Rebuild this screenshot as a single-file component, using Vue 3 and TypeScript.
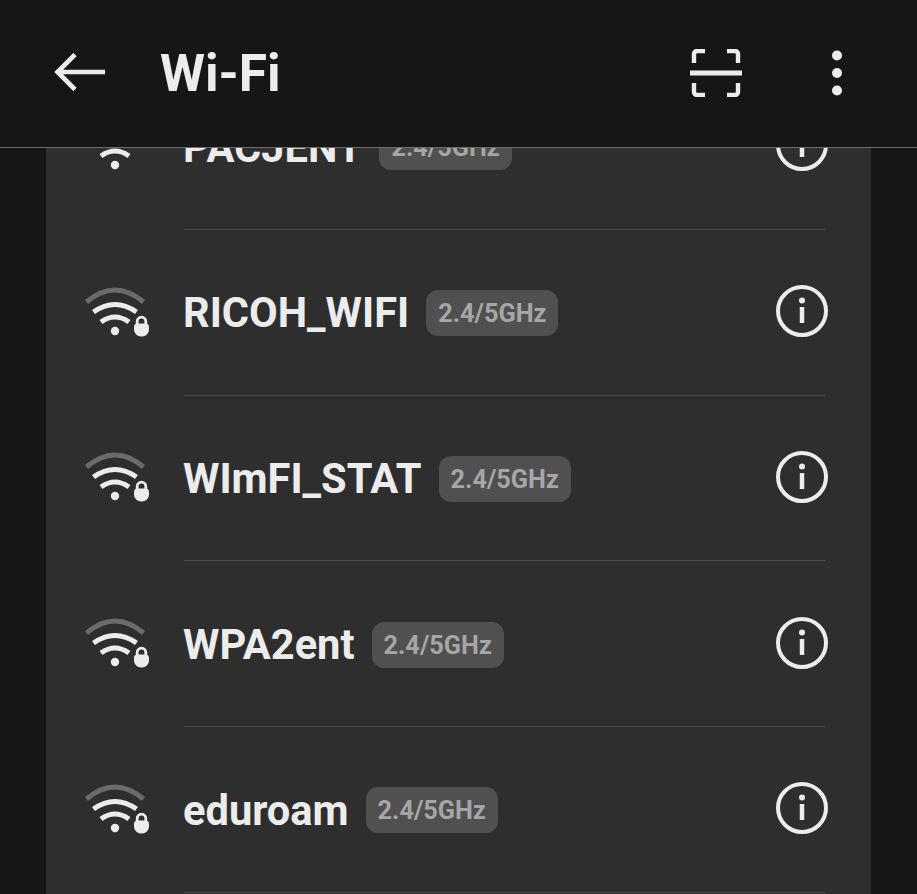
<script setup lang="ts">
interface Network {
  name: string
  secured: boolean
}

const networks: Network[] = [
  { name: 'PACJENT', secured: false },
  { name: 'RICOH_WIFI', secured: true },
  { name: 'WImFI_STAT', secured: true },
  { name: 'WPA2ent', secured: true },
  { name: 'eduroam', secured: true },
]
</script>

<template>
  <div class="page">
    <header class="topbar">
      <svg class="back" width="52" height="40" viewBox="0 0 52 40" fill="none">
        <path d="M51 19H3.5M21 1.5 3.5 19 21 36.5" stroke="#ececec" stroke-width="4.6" />
      </svg>
      <h1 class="title">Wi-Fi</h1>
      <svg class="scan" width="52" height="48" viewBox="0 0 52 48" fill="none">
        <path
          d="M15 2H7a3 3 0 0 0-3 3v9M37 2h8a3 3 0 0 1 3 3v9M15 46H7a3 3 0 0 1-3-3v-9M37 46h8a3 3 0 0 0 3-3v-9"
          stroke="#ececec"
          stroke-width="4.4"
        />
        <path d="M0 24h52" stroke="#ececec" stroke-width="5" />
      </svg>
      <svg class="more" width="12" height="48" viewBox="0 0 12 48">
        <circle cx="6" cy="6.5" r="5" fill="#ececec" />
        <circle cx="6" cy="24" r="5" fill="#ececec" />
        <circle cx="6" cy="41.5" r="5" fill="#ececec" />
      </svg>
    </header>

    <ul class="card">
      <li v-for="net in networks" :key="net.name" class="row">
        <svg class="wifi" width="70" height="56" viewBox="0 0 70 56" fill="none">
          <path d="M6.5 18Q35-6 63.5 18" stroke="#6b6b6b" stroke-width="5" />
          <path d="M13.5 28Q35 13 56.5 28" stroke="#ececec" stroke-width="5" />
          <path d="M21 38Q35 28 49 38" stroke="#ececec" stroke-width="5" />
          <circle cx="35" cy="47" r="4.2" fill="#ececec" />
          <template v-if="net.secured">
            <path d="M57.2 41v-3.5a4.3 4.3 0 0 1 8.6 0V41" stroke="#ececec" stroke-width="2.8" />
            <path
              d="M54 43a3.5 3.5 0 0 1 3.5-3.5h8A3.5 3.5 0 0 1 69 43v2.5a7 7 0 0 1-7 7h-1a7 7 0 0 1-7-7z"
              fill="#ececec"
            />
          </template>
        </svg>
        <div class="row-body">
          <span class="name">{{ net.name }}</span>
          <span class="badge">2.4/5GHz</span>
          <svg class="info" width="52" height="52" viewBox="0 0 52 52" fill="none">
            <circle cx="26" cy="26" r="24" stroke="#ececec" stroke-width="4" />
            <circle cx="26" cy="15.5" r="3" fill="#ececec" />
            <path d="M26 22v16" stroke="#ececec" stroke-width="4.5" />
          </svg>
        </div>
      </li>
    </ul>
  </div>
</template>

<style scoped>
.page {
  height: 894px;
  overflow: hidden;
  background: #161616;
  font-family: Roboto, 'Liberation Sans', sans-serif;
  color: #ececec;
}

.topbar {
  position: relative;
  z-index: 1;
  display: flex;
  align-items: center;
  box-sizing: border-box;
  height: 148px;
  padding: 0 0 2px 54px;
  background: #161616;
  border-bottom: 1px solid #6e6e6e;
}

.back {
  flex: none;
}

.title {
  flex: 1;
  margin: 2px 0 0 54px;
  font-size: 51.4px;
  font-weight: 700;
  line-height: 1;
}

.scan {
  flex: none;
  margin-right: 89px;
}

.more {
  flex: none;
  margin-right: 74px;
}

.card {
  list-style: none;
  margin: -84px 46px 0;
  padding: 0 46px 10px 0;
  background: #2e2e2e;
}

.row {
  display: flex;
  align-items: center;
  height: 165.75px;
}

.wifi {
  flex: none;
  margin: -2px 34px 0;
}

.row-body {
  flex: 1;
  display: flex;
  align-items: center;
  align-self: stretch;
  min-width: 0;
  border-bottom: 1px solid #4b4b4b;
}

.name {
  margin: 2px 0 0 -1px;
  font-size: 41.6px;
  font-weight: 700;
  line-height: 1;
}

.badge {
  margin: 2px 0 0 17px;
  padding: 0 12px;
  height: 46px;
  line-height: 48px;
  border-radius: 12px;
  background: #505050;
  color: #a6a6a6;
  font-size: 25.3px;
  font-weight: 700;
}

.info {
  flex: none;
  margin: -2px -3px 0 auto;
}
</style>

<style>
html,
body {
  margin: 0;
  background: #161616;
}
</style>
